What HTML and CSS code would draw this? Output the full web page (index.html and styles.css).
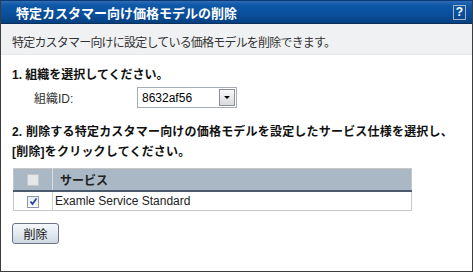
FILE: index.html
```html
<!DOCTYPE html>
<html>
<head>
<title>特定カスタマー向け価格モデルの削除</title>
<meta http-equiv="Content-Type" content="text/html; charset=utf-8" />
<link rel="stylesheet" href="styles.css">
</head>
<body>

<div class="panel">
	<div class="title">
		<span>特定カスタマー向け価格モデルの削除</span>
		<a class="help" href="#">?</a>
	</div>
	<div class="desc">特定カスタマー向けに設定している価格モデルを削除できます。</div>

	<div class="content">
		<h2 class="step">1. 組織を選択してください。</h2>
		<div class="field">
			<label>組織ID:</label>
			<div class="select"><span>8632af56</span><i class="arrow"></i></div>
		</div>

		<h2 class="step step2">2. 削除する特定カスタマー向けの価格モデルを設定したサービス仕様を選択し、<br>[削除]をクリックしてください。</h2>

		<table class="grid">
			<tr>
				<th class="chk"><span class="box off"></span></th>
				<th>サービス</th>
			</tr>
			<tr>
				<td class="chk">
					<span class="box on">
						<svg width="9" height="9" viewBox="0 0 9 9"><path d="M1.5 4.5 L3.5 7 L7.5 1.5" fill="none" stroke="#2446a8" stroke-width="1.8"/></svg>
					</span>
				</td>
				<td>Examle Service Standard</td>
			</tr>
		</table>

		<button class="btn">削除</button>
	</div>
</div>

</body>
</html>
```

FILE: styles.css
```css
* {margin:0;padding:0;box-sizing:border-box;}
body {font-family:"Liberation Sans","Noto Sans CJK JP",sans-serif;font-size:12px;color:#333;background:#fff;}

.panel {width:473px;height:272px;border:1px solid #3c3c3c;border-top-color:#0a3a78;}

.title {height:23px;display:flex;align-items:center;justify-content:space-between;padding:0 6px 0 15px;color:#fff;font-size:13px;font-weight:bold;
	background:linear-gradient(#2f6bb3 0%,#0d58a8 20%,#0a4f9c 60%,#05407f 100%);border-bottom:1px solid #0b2f5c;}
.title .help {display:flex;align-items:center;justify-content:center;width:13px;height:15px;border:1px solid #a8b4c4;color:#fff;font-size:12px;font-weight:bold;text-decoration:none;}

.desc {height:31px;padding:9px 0 0 11px;background:#f0f1f3;font-size:12px;letter-spacing:-0.8px;border-bottom:1px solid #e4e6ea;}

.content {padding:12px 0 0 11px;}
.step {font-size:12px;font-weight:bold;line-height:16px;color:#111;}
.step2 {margin-top:14px;line-height:20px;letter-spacing:0.2px;}

.field {display:flex;align-items:center;margin-top:4px;}
.field label {width:125px;padding-left:22px;}
.select {display:flex;align-items:center;justify-content:space-between;width:100px;height:21px;border:1px solid #a5acb2;padding:0 1px 0 4px;color:#000;background:#fff;}
.select .arrow {position:relative;width:16px;height:17px;border:1px solid #8b9098;background:linear-gradient(#fafafa,#d8dadd);}
.select .arrow:after {content:"";position:absolute;left:4px;top:6px;border-left:3px solid transparent;border-right:3px solid transparent;border-top:3px solid #000;}

.grid {margin:6px 0 0 1px;width:399px;border-collapse:collapse;border:1px solid #c8c8c8;}
.grid th {height:22px;background:#aab8c5;text-align:left;padding-left:7px;font-weight:bold;font-size:12px;color:#222;border-bottom:2px solid #4b5b6b;border-left:1px solid #d4dbe2;}
.grid td {height:20px;padding-left:2px;border-left:1px solid #cfcfcf;color:#222;}
.grid .chk {width:39px;padding:0;border-left:0;text-align:center;}
.box {display:inline-flex;align-items:center;justify-content:center;width:12px;height:12px;vertical-align:middle;}
.box.off {border:1px solid #c4c8cc;background:#e6e7e8;}
.box.on {border:1px solid #8c98a4;background:linear-gradient(#e8ecf0,#fff);}

.btn {margin-top:12px;width:47px;height:21px;border:1px solid #6a7284;border-radius:3px;background:linear-gradient(#f6f8fa,#dfe6ec 60%,#cfd8e0);font-family:"Noto Sans CJK JP",sans-serif;font-size:12px;color:#111;}
```
